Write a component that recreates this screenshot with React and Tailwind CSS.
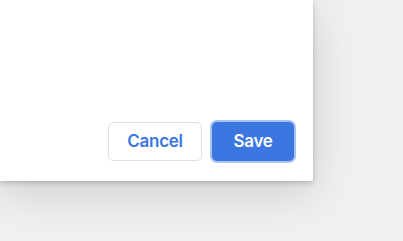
export default function App() {
  return (
    <div className="w-[403px] h-[241px] bg-[#f0f0f0] overflow-hidden" style={{ fontFamily: 'Inter, "Liberation Sans", sans-serif' }}>
      <div className="w-[313px] h-[181px] bg-white shadow-[0_2px_5px_rgba(0,0,0,0.2),0_12px_40px_rgba(0,0,0,0.14)] flex items-end justify-end pr-[19px] pb-[20px]">
        <div className="flex gap-[10px] items-center">
          <button className="w-[94px] h-[39px] rounded-[5px] border-[1.5px] border-[#dcdfe4] bg-white text-[#3b76e1] text-[17px] font-semibold tracking-[-0.3px]">
            Cancel
          </button>
          <button className="w-[82px] h-[39px] rounded-[5px] bg-[#3b76e1] text-white text-[17px] font-semibold tracking-[-0.3px] ring-2 ring-[#a9c4f3]">
            Save
          </button>
        </div>
      </div>
    </div>
  );
}
